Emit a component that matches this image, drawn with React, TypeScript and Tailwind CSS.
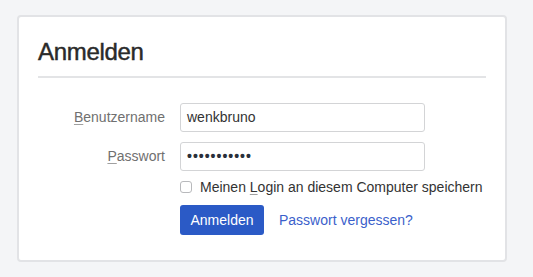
import React from "react";

export default function App() {
  return (
    <div
      className="min-h-screen w-full bg-[#f4f5f7] pt-[15px] pl-[17px]"
      style={{ fontFamily: '"Liberation Sans", Arial, sans-serif' }}
    >
      <div className="w-[490px] rounded-[4px] border-2 border-[#e2e3e6] bg-white px-[19px] pt-[21px] pb-[25px]">
        <h1 className="text-[24px] leading-[28px] tracking-[-0.3px] text-[#2a2a2a] [-webkit-text-stroke:0.45px_#2a2a2a]">Anmelden</h1>
        <div className="mt-[10px] h-[2px] w-full bg-[#e3e4e6]" />
        <div className="mt-[25px] flex flex-col">
          <div className="flex items-center">
            <label className="w-[127px] text-right text-[14px] text-[#707070]">
              <span className="underline decoration-[#a0a0a0] underline-offset-2">B</span>enutzername
            </label>
            <div className="ml-[15px] flex h-[29px] w-[245px] items-center rounded-[3px] border border-[#d3d4d6] px-[6px] text-[14px] text-[#333333]">
              wenkbruno
            </div>
          </div>
          <div className="mt-[10px] flex items-center">
            <label className="w-[127px] text-right text-[14px] text-[#707070]">
              <span className="underline decoration-[#a0a0a0] underline-offset-2">P</span>asswort
            </label>
            <div className="ml-[15px] flex h-[29px] w-[245px] items-center rounded-[3px] border border-[#d3d4d6] px-[6px] text-[14px] font-bold tracking-[1px] text-[#2a2f3a]">
              •••••••••••
            </div>
          </div>
          <div className="mt-[6px] ml-[142px] flex h-[20px] items-center">
            <div className="h-[12px] w-[12px] rounded-[3px] border border-[#b8b9bc] bg-white" />
            <span className="ml-[8px] text-[14px] text-[#333333]">
              Meinen <span className="underline decoration-[#a0a0a0] underline-offset-2">L</span>ogin an diesem Computer speichern
            </span>
          </div>
          <div className="mt-[8px] ml-[142px] flex items-center">
            <button className="flex h-[30px] w-[84px] items-center justify-center rounded-[3px] bg-[#2b5ac6] text-[14px] text-white">
              Anmelden
            </button>
            <span className="ml-[15px] text-[14px] text-[#3b5fcb]">Passwort vergessen?</span>
          </div>
        </div>
      </div>
    </div>
  );
}
